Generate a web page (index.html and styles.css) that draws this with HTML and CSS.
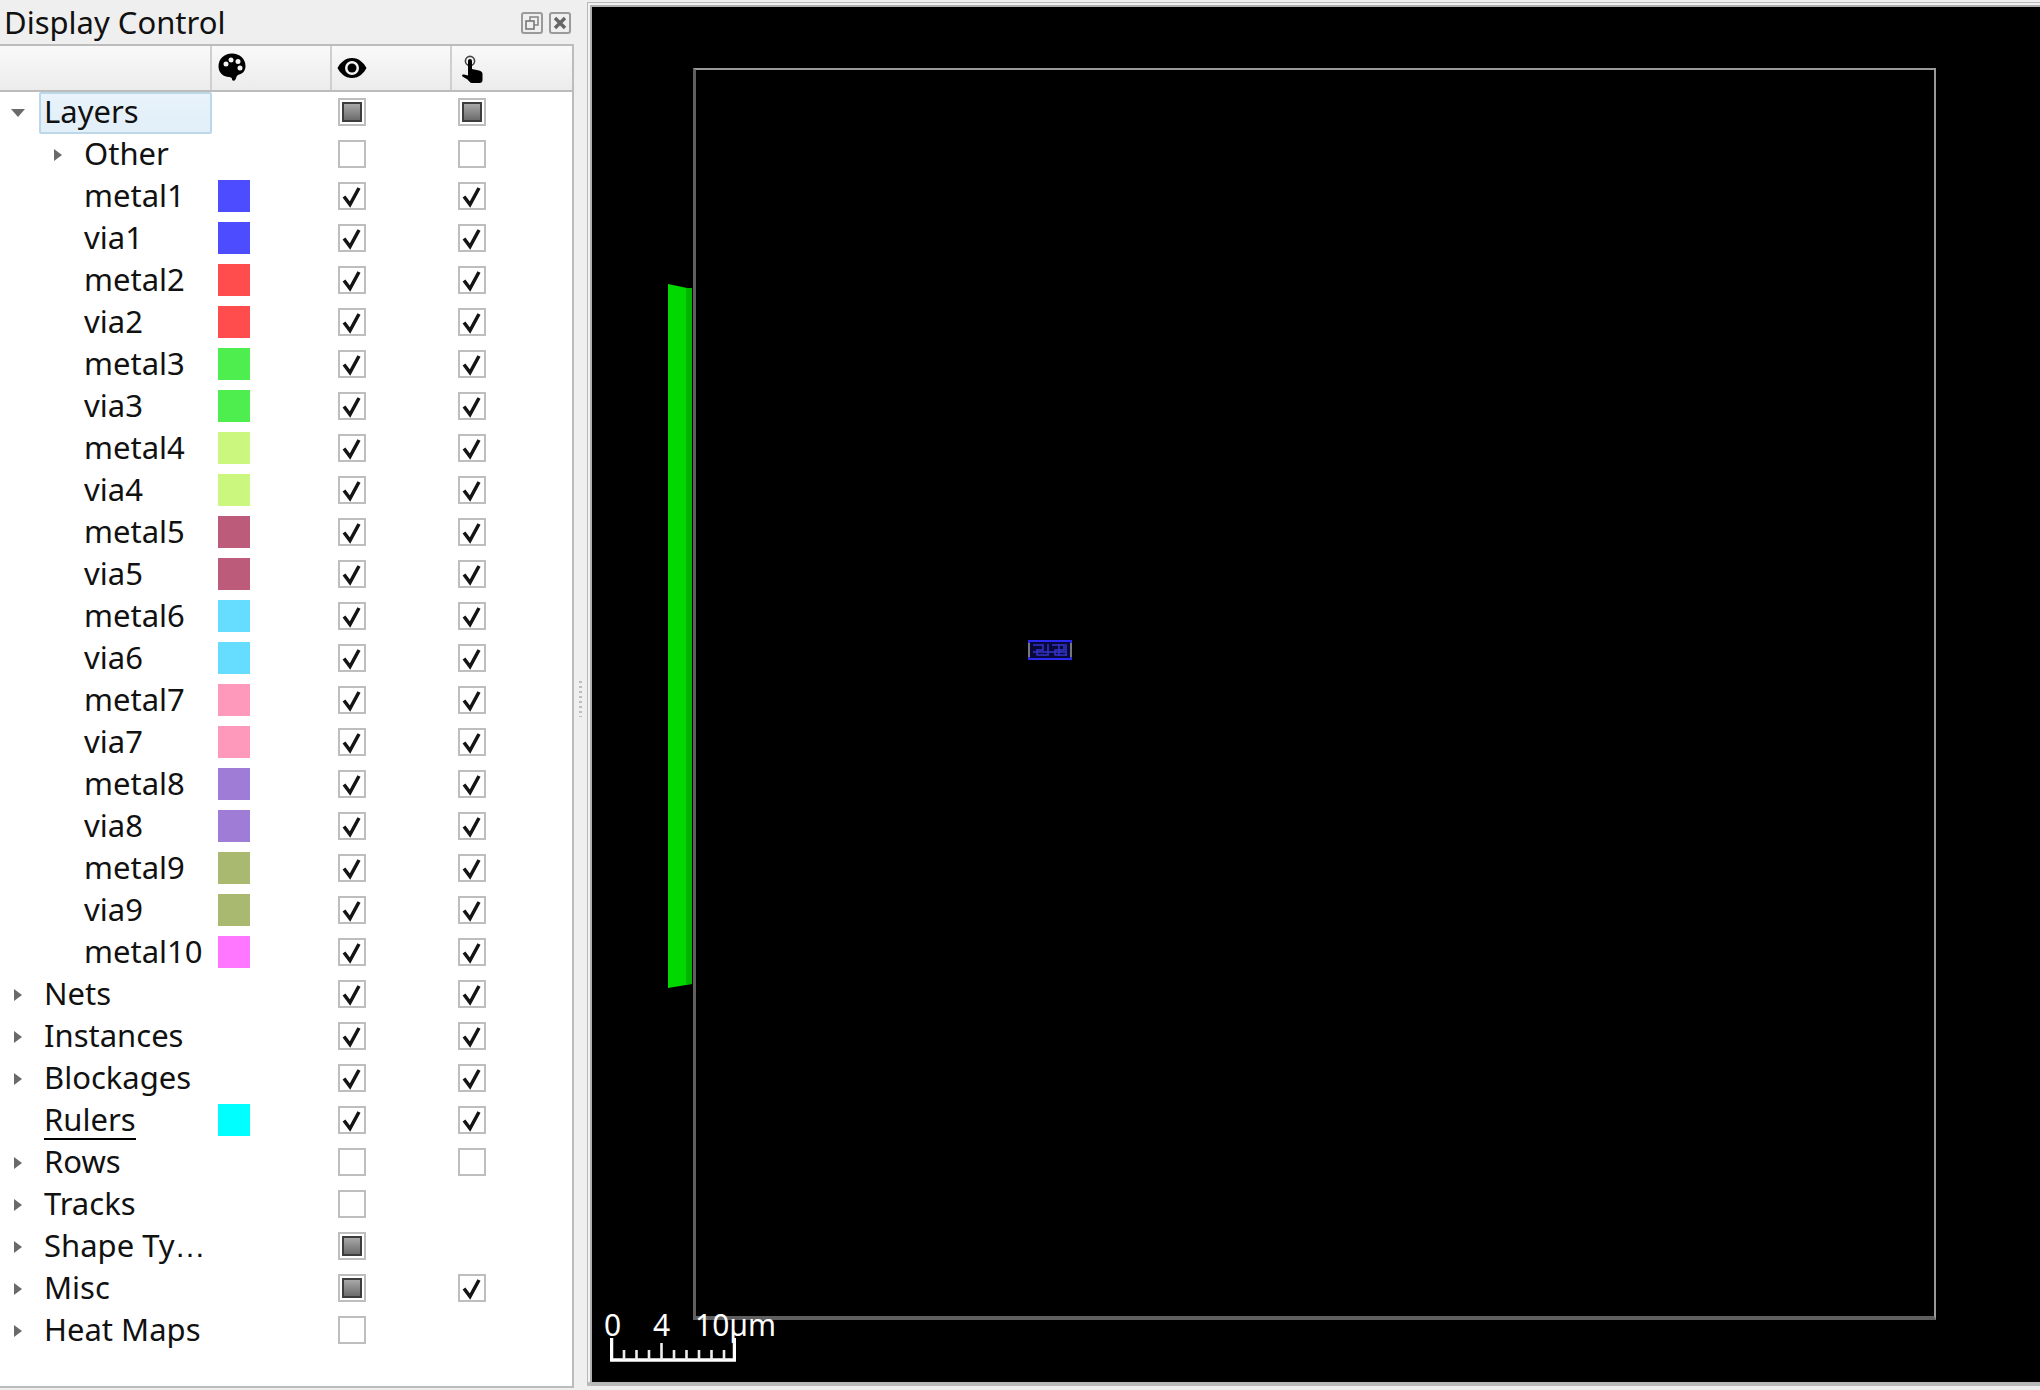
FILE: index.html
```html
<!DOCTYPE html>
<html lang="en">
<head>
<meta charset="utf-8">
<title>Display Control</title>
<link rel="stylesheet" href="styles.css">
</head>
<body>
<svg class="defs" width="0" height="0" aria-hidden="true">
  <symbol id="tick" viewBox="0 0 28 28"><path d="M6 14.500 L12 22.500 L21 6" fill="none" stroke="#141414" stroke-width="3.500"/></symbol>
  <symbol id="right" viewBox="0 0 8 12"><path d="M0 0 L8 6 L0 12 Z" fill="#6a6a6a"/></symbol>
  <symbol id="down" viewBox="0 0 14 8"><path d="M0 0 H14 L7 8 Z" fill="#6a6a6a"/></symbol>
</svg>
<div class="app">
  <aside class="dock">
    <header class="titlebar">
      <span class="title">Display Control</span>
      <span class="title-buttons">
        <svg class="tbtn" viewBox="0 0 22 22"><rect x="1" y="1" width="20" height="20" rx="2" fill="none" stroke="#9a9a9a" stroke-width="2"/><rect x="9" y="5" width="8" height="8" fill="none" stroke="#8a8a8a" stroke-width="1.600"/><rect x="5" y="9" width="8" height="8" fill="#efefef" stroke="#777" stroke-width="1.600"/></svg>
        <svg class="tbtn" viewBox="0 0 22 22"><rect x="1" y="1" width="20" height="20" rx="2" fill="none" stroke="#9a9a9a" stroke-width="2"/><path d="M6 6 L16 16 M16 6 L6 16" stroke="#666" stroke-width="3.400"/></svg>
      </span>
    </header>
    <div class="tree">
      <div class="thead">
        <div class="th"></div>
        <div class="th th-icon">
          <svg class="ico-palette" viewBox="0 0 28 28"><path fill-rule="evenodd" fill="#000" d="M14 0.5C6 .5 .5 6 .5 13.5 .5 20 6 24 11 24c2 0 3 1 3 2 0 1.500 1 2 2.500 1.500C18.500 26 18 23 20 22c3.500-1 7.500-3 7.500-9C27.500 5.500 21.500.5 14 .5ZM8 8.500a2.500 2.500 0 1 1 0 5 2.500 2.500 0 0 1 0-5ZM13 4.500a2.500 2.500 0 1 1 0 5 2.500 2.500 0 0 1 0-5ZM20 6a2.500 2.500 0 1 1 0 5 2.500 2.500 0 0 1 0-5ZM22 12.500a2.500 2.500 0 1 1 0 5 2.500 2.500 0 0 1 0-5Z"/></svg>
        </div>
        <div class="th th-icon">
          <svg class="ico-eye" viewBox="0 0 30 22"><path fill-rule="evenodd" fill="#000" d="M15 1C8 1 3 6 0.500 11 3 16 8 21 15 21s12-5 14.500-10C27 6 22 1 15 1ZM15 4a7 7 0 1 1 0 14 7 7 0 0 1 0-14Z"/><circle cx="15" cy="11" r="4.500" fill="#000"/></svg>
        </div>
        <div class="th th-icon">
          <svg class="ico-hand" viewBox="0 0 22 28"><circle cx="8" cy="6" r="4.600" fill="none" stroke="#444" stroke-width="1.600"/><path fill="#000" d="M6 6a2 2 0 0 1 4 0V14l7 1.500c2 .5 3.500 1.500 3.500 3.500V25c0 2-1 3-3 3H10C8 28 7 26 5.500 24.500L.5 21.500c-1-1 0-2.500 1.500-2L6 20.500Z"/></svg>
        </div>
      </div>

      <div class="row"><div class="name lvl0 selected"><svg class="arrow down"><use href="#down"/></svg><span>Layers</span></div><div class="color"></div><div class="cell"><span class="box part"></span></div><div class="cell"><span class="box part"></span></div></div>
      <div class="row"><div class="name lvl1"><svg class="arrow"><use href="#right"/></svg><span>Other</span></div><div class="color"></div><div class="cell"><span class="box"></span></div><div class="cell"><span class="box"></span></div></div>
      <div class="row"><div class="name lvl1"><span>metal1</span></div><div class="color"><span class="swatch c-blue"></span></div><div class="cell"><svg class="box"><use href="#tick"/></svg></div><div class="cell"><svg class="box"><use href="#tick"/></svg></div></div>
      <div class="row"><div class="name lvl1"><span>via1</span></div><div class="color"><span class="swatch c-blue"></span></div><div class="cell"><svg class="box"><use href="#tick"/></svg></div><div class="cell"><svg class="box"><use href="#tick"/></svg></div></div>
      <div class="row"><div class="name lvl1"><span>metal2</span></div><div class="color"><span class="swatch c-red"></span></div><div class="cell"><svg class="box"><use href="#tick"/></svg></div><div class="cell"><svg class="box"><use href="#tick"/></svg></div></div>
      <div class="row"><div class="name lvl1"><span>via2</span></div><div class="color"><span class="swatch c-red"></span></div><div class="cell"><svg class="box"><use href="#tick"/></svg></div><div class="cell"><svg class="box"><use href="#tick"/></svg></div></div>
      <div class="row"><div class="name lvl1"><span>metal3</span></div><div class="color"><span class="swatch c-green"></span></div><div class="cell"><svg class="box"><use href="#tick"/></svg></div><div class="cell"><svg class="box"><use href="#tick"/></svg></div></div>
      <div class="row"><div class="name lvl1"><span>via3</span></div><div class="color"><span class="swatch c-green"></span></div><div class="cell"><svg class="box"><use href="#tick"/></svg></div><div class="cell"><svg class="box"><use href="#tick"/></svg></div></div>
      <div class="row"><div class="name lvl1"><span>metal4</span></div><div class="color"><span class="swatch c-lime"></span></div><div class="cell"><svg class="box"><use href="#tick"/></svg></div><div class="cell"><svg class="box"><use href="#tick"/></svg></div></div>
      <div class="row"><div class="name lvl1"><span>via4</span></div><div class="color"><span class="swatch c-lime"></span></div><div class="cell"><svg class="box"><use href="#tick"/></svg></div><div class="cell"><svg class="box"><use href="#tick"/></svg></div></div>
      <div class="row"><div class="name lvl1"><span>metal5</span></div><div class="color"><span class="swatch c-rose"></span></div><div class="cell"><svg class="box"><use href="#tick"/></svg></div><div class="cell"><svg class="box"><use href="#tick"/></svg></div></div>
      <div class="row"><div class="name lvl1"><span>via5</span></div><div class="color"><span class="swatch c-rose"></span></div><div class="cell"><svg class="box"><use href="#tick"/></svg></div><div class="cell"><svg class="box"><use href="#tick"/></svg></div></div>
      <div class="row"><div class="name lvl1"><span>metal6</span></div><div class="color"><span class="swatch c-sky"></span></div><div class="cell"><svg class="box"><use href="#tick"/></svg></div><div class="cell"><svg class="box"><use href="#tick"/></svg></div></div>
      <div class="row"><div class="name lvl1"><span>via6</span></div><div class="color"><span class="swatch c-sky"></span></div><div class="cell"><svg class="box"><use href="#tick"/></svg></div><div class="cell"><svg class="box"><use href="#tick"/></svg></div></div>
      <div class="row"><div class="name lvl1"><span>metal7</span></div><div class="color"><span class="swatch c-pink"></span></div><div class="cell"><svg class="box"><use href="#tick"/></svg></div><div class="cell"><svg class="box"><use href="#tick"/></svg></div></div>
      <div class="row"><div class="name lvl1"><span>via7</span></div><div class="color"><span class="swatch c-pink"></span></div><div class="cell"><svg class="box"><use href="#tick"/></svg></div><div class="cell"><svg class="box"><use href="#tick"/></svg></div></div>
      <div class="row"><div class="name lvl1"><span>metal8</span></div><div class="color"><span class="swatch c-violet"></span></div><div class="cell"><svg class="box"><use href="#tick"/></svg></div><div class="cell"><svg class="box"><use href="#tick"/></svg></div></div>
      <div class="row"><div class="name lvl1"><span>via8</span></div><div class="color"><span class="swatch c-violet"></span></div><div class="cell"><svg class="box"><use href="#tick"/></svg></div><div class="cell"><svg class="box"><use href="#tick"/></svg></div></div>
      <div class="row"><div class="name lvl1"><span>metal9</span></div><div class="color"><span class="swatch c-olive"></span></div><div class="cell"><svg class="box"><use href="#tick"/></svg></div><div class="cell"><svg class="box"><use href="#tick"/></svg></div></div>
      <div class="row"><div class="name lvl1"><span>via9</span></div><div class="color"><span class="swatch c-olive"></span></div><div class="cell"><svg class="box"><use href="#tick"/></svg></div><div class="cell"><svg class="box"><use href="#tick"/></svg></div></div>
      <div class="row"><div class="name lvl1"><span>metal10</span></div><div class="color"><span class="swatch c-magenta"></span></div><div class="cell"><svg class="box"><use href="#tick"/></svg></div><div class="cell"><svg class="box"><use href="#tick"/></svg></div></div>
      <div class="row"><div class="name lvl0"><svg class="arrow"><use href="#right"/></svg><span>Nets</span></div><div class="color"></div><div class="cell"><svg class="box"><use href="#tick"/></svg></div><div class="cell"><svg class="box"><use href="#tick"/></svg></div></div>
      <div class="row"><div class="name lvl0"><svg class="arrow"><use href="#right"/></svg><span>Instances</span></div><div class="color"></div><div class="cell"><svg class="box"><use href="#tick"/></svg></div><div class="cell"><svg class="box"><use href="#tick"/></svg></div></div>
      <div class="row"><div class="name lvl0"><svg class="arrow"><use href="#right"/></svg><span>Blockages</span></div><div class="color"></div><div class="cell"><svg class="box"><use href="#tick"/></svg></div><div class="cell"><svg class="box"><use href="#tick"/></svg></div></div>
      <div class="row"><div class="name lvl0"><span class="ruled">Rulers</span></div><div class="color"><span class="swatch c-cyan"></span></div><div class="cell"><svg class="box"><use href="#tick"/></svg></div><div class="cell"><svg class="box"><use href="#tick"/></svg></div></div>
      <div class="row"><div class="name lvl0"><svg class="arrow"><use href="#right"/></svg><span>Rows</span></div><div class="color"></div><div class="cell"><span class="box"></span></div><div class="cell"><span class="box"></span></div></div>
      <div class="row"><div class="name lvl0"><svg class="arrow"><use href="#right"/></svg><span>Tracks</span></div><div class="color"></div><div class="cell"><span class="box"></span></div><div class="cell"></div></div>
      <div class="row"><div class="name lvl0"><svg class="arrow"><use href="#right"/></svg><span>Shape Ty<span class="ell">…</span></span></div><div class="color"></div><div class="cell"><span class="box part"></span></div><div class="cell"></div></div>
      <div class="row"><div class="name lvl0"><svg class="arrow"><use href="#right"/></svg><span>Misc</span></div><div class="color"></div><div class="cell"><span class="box part"></span></div><div class="cell"><svg class="box"><use href="#tick"/></svg></div></div>
      <div class="row"><div class="name lvl0"><svg class="arrow"><use href="#right"/></svg><span>Heat Maps</span></div><div class="color"></div><div class="cell"><span class="box"></span></div><div class="cell"></div></div>
    </div>
  </aside>

  <div class="splitter"><span class="grip"></span></div>

  <main class="frame">
    <div class="canvas">
      <div class="die"></div>
      <svg class="pin" viewBox="0 0 26 704"><path d="M0 0 L24 5 V700 L0 704 Z" fill="#00d800"/><path d="M18 4 H24 V700 H18 Z" fill="#00b400"/></svg>
      <svg class="cellmark" viewBox="0 0 44 20"><rect x="1" y="1" width="42" height="18" fill="#08083a" stroke="#2a2af0" stroke-width="2"/><path d="M5 5 H15 V10 H9 V15 H19 M20 4 V16 M24 5 H36 V10 H27 V15 H39 M31 4 V16 M5 12 H38 M38 4 V16" fill="none" stroke="#3434c8" stroke-width="1.500"/><path d="M1 3 V17 M43 3 V17" stroke="#777" stroke-width="2"/></svg>
      <div class="scale">
        <span class="tick-label l0">0</span>
        <span class="tick-label l4">4</span>
        <span class="tick-label l10">10µm</span>
        <svg class="ruler" viewBox="0 0 126 24"><path d="M1.500 0 V22 H124.500 V0" fill="none" stroke="#fff" stroke-width="3.500"/><path d="M14 12V22M26.500 12V22M39 12V22M51.500 5V22M64 12V22M76.500 12V22M89 12V22M101.500 12V22M114 12V22" stroke="#eee" stroke-width="2.600"/></svg>
      </div>
    </div>
  </main>
</div>
</body>
</html>
```
FILE: styles.css
```css
* { box-sizing: border-box; }
html, body { margin: 0; height: 100%; overflow: hidden; }
body { background: #efefef; font-family: "Noto Sans", "Liberation Sans", sans-serif; color: #111; }
.defs { position: absolute; }
.app { display: flex; height: 1390px; }

.dock { width: 574px; flex: none; display: flex; flex-direction: column; }
.titlebar { height: 44px; display: flex; align-items: center; justify-content: space-between; padding: 0 3px 0 4px; }
.title { font-size: 31px; line-height: 40px; margin-top: -1px; }
.title-buttons { display: flex; gap: 6px; margin-top: 1px; margin-right: 0; }
.tbtn { width: 22px; height: 22px; display: block; }

.tree { height: 1344px; background: #fff; border-top: 2px solid #bcbcbc; border-right: 2px solid #bcbcbc; border-bottom: 2px solid #bcbcbc; }
.thead { display: grid; grid-template-columns: 212px 120px 120px 1fr; height: 46px; border-bottom: 2px solid #bcbcbc; background: linear-gradient(#f9f9f9, #ececec); }
.th { border-right: 2px solid #cfcfcf; display: flex; align-items: center; padding-left: 6px; }
.th:last-child { border-right: 0; }
.ico-palette { width: 28px; height: 28px; margin-top: -2px; }
.ico-eye { width: 30px; height: 22px; margin-top: -1px; margin-left: -1px; }
.ico-hand { width: 22px; height: 28px; margin-left: 4px; margin-top: 2px; }

.row { display: grid; grid-template-columns: 212px 120px 120px 1fr; height: 42px; }
.name { position: relative; font-size: 31px; line-height: 38px; white-space: nowrap; }
.lvl0 { padding-left: 44px; }
.lvl1 { padding-left: 84px; }
.ell { font-family: "Liberation Sans", sans-serif; }
.arrow { position: absolute; top: 15px; width: 8px; height: 12px; }
.lvl0 .arrow { left: 14px; }
.lvl1 .arrow { left: 54px; }
.arrow.down { left: 11px; top: 17px; width: 14px; height: 8px; }
.selected::after { content: ""; position: absolute; left: 39px; top: 0; right: 0; bottom: 0; border: 2px solid #bcd7e8; border-radius: 2px; background: linear-gradient(#e8f3fb, #e2eff8); z-index: 0; }
.selected span { position: relative; z-index: 1; }
.ruled { display: inline-block; border-bottom: 2px solid #000; height: 40px; line-height: 38px; }

.color { display: flex; align-items: center; padding-left: 6px; padding-bottom: 2px; }
.swatch { width: 32px; height: 32px; display: block; }
.c-blue { background: #4d4dff; }
.c-red { background: #ff4d4d; }
.c-green { background: #4dee4d; }
.c-lime { background: #ccf77f; }
.c-rose { background: #bd5b7b; }
.c-sky { background: #66ddff; }
.c-pink { background: #ff99bb; }
.c-violet { background: #9f7cd5; }
.c-olive { background: #a9ba70; }
.c-magenta { background: #ff77ff; }
.c-cyan { background: #00ffff; }

.cell { display: flex; align-items: center; padding-left: 6px; padding-bottom: 2px; }
.box { display: block; width: 28px; height: 28px; border: 2px solid #bebebe; background: #fff; position: relative; padding: 0; }
svg.box { border: 0; outline: 2px solid #bebebe; outline-offset: -2px; }
.part::after { content: ""; position: absolute; left: 2px; top: 2px; right: 2px; bottom: 2px; border: 2px solid #3c3c3c; background: linear-gradient(#a8a8a8, #6c6c6c); }

.splitter { width: 13px; flex: none; display: flex; align-items: center; justify-content: center; }
.grip { width: 3px; height: 36px; margin-top: 8px; background: repeating-linear-gradient(#bdbdbd 0 2px, transparent 2px 5px); }

.frame { flex: 1; height: 1384px; margin-top: 2px; border: solid #b9b9b9; border-width: 1px 0 4px 1px; padding: 2px 0 0 2px; background: #f2f2f2; min-width: 0; }
.canvas { position: relative; height: 100%; background: #000; border-left: 2px solid #b0b0b0; border-top: 2px solid #b0b0b0; overflow: hidden; }

.die { position: absolute; left: 101px; top: 61px; width: 1243px; height: 1252px; border-style: solid; border-color: #999 #999 #5f5f5f #5f5f5f; border-width: 2px 2px 4px 3px; }
.pin { position: absolute; left: 76px; top: 277px; width: 26px; height: 704px; }
.cellmark { position: absolute; left: 436px; top: 633px; width: 44px; height: 20px; }
.scale { position: absolute; left: 0; top: 0; }
.tick-label { position: absolute; top: 1298px; color: #fff; font-size: 30px; line-height: 40px; white-space: nowrap; }
.l0 { left: 12px; }
.l4 { left: 61px; }
.l10 { left: 103px; }
.ruler { position: absolute; left: 18px; top: 1331px; width: 126px; height: 24px; display: block; }
```
